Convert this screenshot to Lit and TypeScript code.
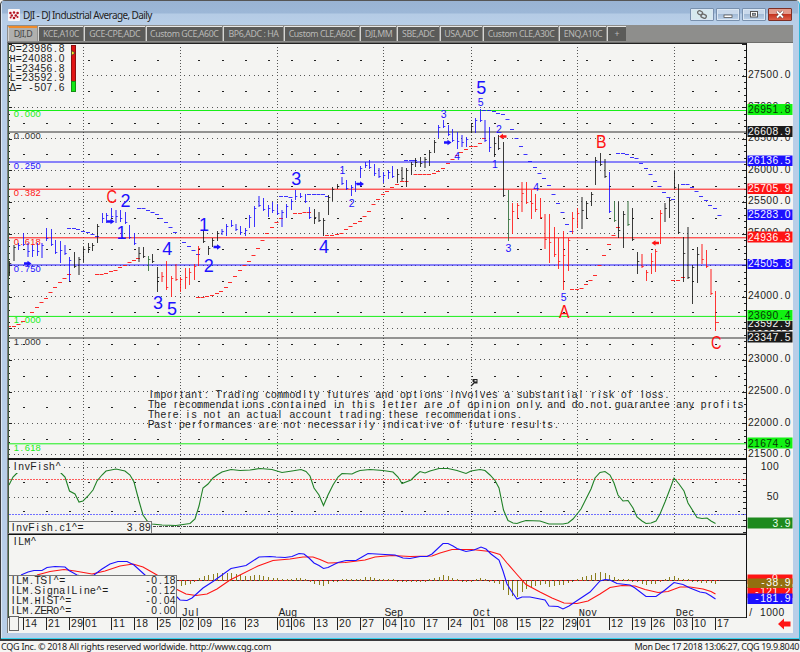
import { LitElement, html, svg, css } from "lit";
import { customElement, property } from "lit/decorators.js";

type P = [number, number];

const BLUE = "#1c10ff";
const RED = "#ff1414";
const LIME = "#18ee18";
const INK = "#1a1a1a";
const GREEN = "#2c6a35";

const pairs = (s: string): P[] =>
  s.trim().split(/\s+/).map((p) => p.split(",").map(Number) as P);

// x, high, low and colour key of every daily bar
const BARS = `9.5,261,276,k 14,245,261,k 18.5,243,250,b 23.5,233,246,b 28,243,257,b 32.5,245,257,b 37.5,243,256,b 42,243,258,b
46.5,228,241,b 51.5,229,246,b 55.5,240,254,b 60.5,241,263,b 65,245,255,b 69.5,257,281,b 74.5,252,268,k 79,257,275,k 83.5,247,262,k
88.5,243,253,k 92.5,243,251,k 97.5,224,243,k 102.5,213,223,b 106.5,213,223,b 111.5,208,218,b 116,210,223,b 120.5,210,222,b
125.5,212,224,b 129.5,225,239,b 134.5,233,245,b 139,247,262,k 143.5,247,258,k 148.5,256,271,g 152.5,254,263,k 157.5,267,292,k
162,272,282,r 166.5,261,290,r 171.5,276,297,r 176,264,281,r 180.5,277,292,r 185.5,268,289,r 189.5,268,285,r 194.5,264,280,r
198.5,246,266,r 203.5,230,243,k 208.5,246,255,k 212.5,238,247,k 217.5,231,241,k 222,229,235,b 226.5,224,236,b 231.5,220,227,b
236,224,231,b 240.5,226,235,b 245.5,228,236,b 249.5,215,228,b 254.5,206,227,b 259,196,207,b 263.5,198,211,b 268.5,205,217,b
272.5,202,213,b 277.5,204,215,b 282,210,227,b 286.5,204,218,b 291.5,199,210,b 295.5,190,200,b 300.5,193,198,b 305.5,194,203,b
309.5,207,219,b 314.5,209,224,k 319,212,222,k 323.5,218,236,k 328.5,195,215,k 332.5,187,201,k 337.5,184,189,k 342,177,185,b
346.5,180,190,b 351.5,185,196,b 355.5,181,192,b 360.5,166,178,b 365.5,162,168,b 369.5,160,169,b 374.5,164,176,b 379,168,178,b
383.5,172,183,b 388.5,170,179,b 392.5,166,178,b 397.5,169,183,k 402,167,181,k 406.5,168,187,k 411.5,162,175,k 415.5,158,167,k
420.5,157,167,k 425,157,168,k 429.5,150,166,k 434.5,140,153,k 438.5,125,138,b 443.5,120,128,b 448.5,125,136,b 452.5,129,142,b
457.5,132,149,b 462,135,147,b 466.5,137,147,b 471.5,123,133,k 475.5,118,133,b 480.5,109,122,b 485,120,142,b 489.5,127,152,b
494.5,137,157,k 498.5,135,150,k 503.5,142,197,k 508.5,190,241,g 512.5,203,234,r 517.5,203,219,r 522,182,212,r 526.5,182,204,r
531.5,190,219,r 535.5,194,212,r 540.5,198,219,r 545,214,249,r 549.5,214,263,r 554.5,227,257,r 558.5,238,269,r 563.5,231,290,r
568.5,238,271,r 572.5,212,234,r 577.5,208,228,r 582,197,229,k 586.5,201,218,k 591.5,192,206,k 595.5,157,185,k 600.5,153,166,k
605,159,178,k 609.5,172,213,b 614.5,201,222,g 618.5,202,238,k 623.5,211,248,k 628,201,226,g 632.5,208,241,k 637.5,252,274,k
642,254,268,r 646.5,270,281,r 651.5,253,274,r 655.5,249,272,r 660.5,210,244,r 665,203,222,k 669.5,198,218,k 674.5,171,189,k
678.5,184,234,k 683.5,237,282,k 688,227,279,k 692.5,265,304,k 697.5,247,283,k 702,244,264,r 706.5,250,268,r 711,269,295,r 715.5,291,331,r`
  .split(/\s+/)
  .map((s) => {
    const [x, h, l, c] = s.split(",");
    return { x: +x, h: +h, l: +l, c };
  });

const STOPS_BLUE = pairs(`69,228.5 74,228.5 78,229.5 83,231.5 88,232.5 92.5,234.5 97,236.5 139,208.5 143.5,208.5 148,210.5 152.5,212.5
157,214.5 161,218.5 166,222.5 170.5,227.5 175,232.5 184,242.5 189,246.5 193.5,250.5 198,254.5 281,196.5 286,196.5 290.5,197.5
309,194.5 314,194.5 318.5,194.5 323,194.5 327,196.5 406,160.5 411,160.5 415,160.5 484,110.5 489,110.5 494,111.5 498,113.5
503,114.5 507.5,119.5 512,129.5 516.5,138.5 521,146.5 525.5,154.5 530,161.5 535,167.5 539.5,173.5 544,178.5 549,185.5
553.5,194.5 558,203.5 562.5,212.5 567,224.5 571.5,231.5 618,153.5 623,153.5 627,154.5 632,157.5 636.5,158.5 641,163.5 646,168.5
650.5,174.5 655,181.5 659.5,186.5 664,192.5 668.5,197.5 673,199.5 683,184.5 687.5,184.5 692,187.5 696.5,191.5 701,196.5
706,200.5 710,205.5 715,208.5 719.5,215.5`);
const STOPS_RED = pairs(`9,326.5 14,326.5 18.5,324.5 23,321.5 32,312.5 37,307.5 41.5,302.5 46,298.5 50.5,292.5 55,287.5 60,282.5
64.5,278.5 69,274.5 97,274.5 101.5,274.5 106,273.5 111,271.5 115.5,270.5 120,267.5 125,265.5 129.5,262.5 134,260.5 138,258.5
198,297.5 202.5,297.5 207,296.5 212,295.5 217,293.5 221,291.5 226,287.5 230,282.5 235,276.5 240,270.5 244.5,265.5 249,261.5
253.5,255.5 258,248.5 262.5,240.5 267,233.5 272,227.5 276.5,222.5 281,218.5 295,213.5 300,213.5 304.5,212.5 309,212.5
327,235.5 332,235.5 337,234.5 341.5,233.5 346,229.5 350.5,226.5 355,223.5 360,221.5 364.5,216.5 369,211.5 373.5,204.5
378,199.5 383,194.5 387,191.5 392,187.5 397,184.5 402,181.5 406.5,181.5 415.5,174.5 420,174.5 424.5,174.5 429,174.5 434,173.5
438,171.5 443,168.5 448,163.5 452.5,159.5 457,155.5 461,152.5 466,149.5 471,146.5 475.5,146.5 480,143.5 484,138.5 572,289.5
577,289.5 581.5,288.5 586,284.5 590.5,280.5 595,275.5 599.5,265.5 604,255.5 609,244.5 613.5,235.5 618,227.5 673,280.5
678,280.5 683,277.5`);

const FISH = pairs(`9,485 13,477 17,473 24,470 55,470 60,472 65,477 69.5,491 75,494 79,502 83,501 88,496 93,490 97,481 102,475
106,471 111,470 116,469 125,471 130,475 134,482 139,501 143,515 148,522 152,524 162,525 176,525.5 190,523.5 195,519 199,506
203,488 208,484 213,478 217,475 222,472 231,469.5 240,470.5 250,470 260,468.5 272,469.5 282,472.5 292,471 301,469.5 306,471.5
310,476 314,488 319,495 323.5,505.5 328,495 333,485 338,477 342,473.5 352,474 356,472 360,470.5 370,469.5 383,470.5 393,472
398,477 402,483.5 411,480 416,475 420,471.5 425,473 430,471 439,468.5 448,468.5 457,470.5 466,473.5 471,471 480,469.5
485,470.5 490,475 495,480.5 499,488 503.5,510 508,520.5 513,523 517,523.5 521,522 526,520.5 540,521 549,524 563,524 568,523
573,519 577,514 581,509 586,499 591,489 595,478 600,472.5 605,471.5 610,475 614,483 618,495 623,501 628,500.5 633,508 637,517
642,521 646,523.5 651,523 656,521 660,514 665,502 670,489 674,478 679,484 684,491 688,503 693,511 697,517.5 702,518.5 707,518
711,521 715.5,523.5`);
const TSI = pairs(`21,575 28,572 34,570.5 42,570.5 47,567.5 55,566.5 65,567 69,570.5 77,575 86,577 94,575 102,569 110,564
118,561.5 127,561.5 134,565 145,575 176,596 180,600 187,600.5 192,598 203,588 213,581.5 231,568.5 246,565.5 259,557 270,556.5
276,557 285,557.5 292,556.5 299,553.5 304,554 309,558 314,563 319,565.5 323.5,568.5 328,567.5 338,562.5 346,560.5 356,560.5
362,557 368,553.5 385,554.5 395,555 403,558 410,558.5 420,556.5 427,556.5 432,554 443,543.5 448,543.5 453,546 457,548.5
466,551.5 474,550 481,547 486,549 491,554 499,560 503,571 507,584 512,592 517,599 522,597 530,597 545,600 549,606 558,606.5
563,609 569,606 578,600 590,592 600,581 605,579.5 610,580 617,583.5 630,585 635,588 646,596.5 656,596.5 665,590 674,582.5
683,584.5 690,588 700,592 706,593 711,596 715.5,599`);
const SIGNAL = pairs(`37,575 50,571.5 64,569.5 75,571 92,574 105,571 120,566 133,564 143,567 157,575 176,589 186,594 196,595.5
207,594 217,589 230,580 240,575 258,566 273,560.5 290,559 303,557 313,557 320,559.5 328,563 345,562.5 365,560 375,557
392,555.5 410,556.5 432,556 440,553 452,549.5 472,549.5 490,551.5 500,554.5 507,563 517,574.5 526,584.5 540,592 552,598
564,603 577,603.5 588,601 600,594 610,587.5 622,585.5 635,586 645,589.5 658,592.5 668,591.5 680,587 690,587 703,589
711,591.5 715.5,594`);

const MONTHS: [number, string][] = [[83.5, ""], [180.5, "Jul"], [277.5, "Aug"], [383.5, "Sep"], [471.5, "Oct"], [577.5, "Nov"], [674.5, "Dec"]];
const DAYS: [number, string][] = [
  [23.5, "14"], [46.5, "21"], [69.5, "29"], [83.5, "01"], [111.5, "11"], [134.5, "18"], [157.5, "25"], [180.5, "02"], [198.5, "09"],
  [222.5, "16"], [245.5, "23"], [277.5, "01"], [291.5, "06"], [314.5, "13"], [337.5, "20"], [360.5, "27"], [383.5, "04"],
  [401.5, "10"], [424.5, "17"], [448.5, "24"], [471.5, "01"], [494.5, "08"], [517.5, "15"], [540.5, "22"], [563.5, "29"],
  [577.5, "01"], [609.5, "12"], [632.5, "19"], [651.5, "26"], [674.5, "03"], [692.5, "10"], [715.5, "17"],
];
const WEEKS = [23, 46, 69, 88, 111, 134, 157, 198, 222, 245, 268, 291, 314, 337, 360, 383, 401, 424, 447, 471, 494, 517, 540, 563, 586, 609, 632, 651, 692, 715, 738];

// y, line colour, level name, label baseline, thickness
const LEVELS: [number, string, string, number, number][] = [
  [110.5, LIME, "0.000", 116.5, 1], [132, "#333", "0.000", 139, 1], [162, BLUE, "0.250", 168.5, 1], [189.2, RED, "0.382", 195.7, 1],
  [237.8, RED, "0.618", 245, 1], [265, BLUE, "0.750", 271.5, 1], [316.4, LIME, "1.000", 322.7, 1], [338, "#333", "1.000", 344.7, 1],
  [443.8, LIME, "1.618", 450.5, 1],
];

// text, left, baseline, size, colour
const WAVES: [string, number, number, number, string][] = [
  ["C", 106.5, 203, 18, RED], ["2", 120.5, 207, 18, BLUE], ["1", 116.5, 239, 18, BLUE], ["1", 199, 231, 18, BLUE], ["2", 203.8, 272, 18, BLUE],
  ["3", 291.3, 184.5, 18, BLUE], ["4", 319, 253, 18, BLUE], ["4", 162.3, 255, 18, BLUE], ["3", 153, 309, 18, BLUE], ["5", 167, 314.5, 18, BLUE],
  ["5", 476.3, 94, 18, BLUE], ["A", 559, 317.5, 18, RED], ["B", 596, 147.7, 18, RED], ["C", 711, 348.7, 18, RED],
  ["5", 477.7, 106, 10.5, BLUE], ["3", 440.7, 118, 10.5, BLUE], ["4", 454.3, 159.5, 10.5, BLUE], ["2", 496, 132.5, 10.5, BLUE],
  ["1", 492, 167.5, 10.5, BLUE], ["4", 533.3, 191, 10.5, BLUE], ["3", 505.5, 251.5, 10.5, BLUE], ["5", 560.8, 300.5, 10.5, BLUE],
  ["1", 339.5, 173.5, 10.5, BLUE], ["2", 348.7, 207, 10.5, BLUE],
];

const TAGS: [string, number, number, string, string][] = [
  ["23592.9", 321, 330, "#1a1a1a", "#f4f4f2"], ["26951.8", 104, 115, "#12f212", "#063806"], ["26608.9", 126, 137, "#1a1a1a", "#f4f4f2"],
  ["26136.5", 155.5, 166, BLUE, "#f4f4ff"], ["25705.9", 183.5, 194, RED, "#fff4f4"], ["25283.0", 209.5, 220, BLUE, "#f4f4ff"],
  ["24936.3", 231.5, 242.5, RED, "#fff4f4"], ["24505.8", 259, 269, BLUE, "#f4f4ff"], ["23690.4", 310, 320.5, "#12f212", "#063806"],
  ["23347.5", 331.5, 342.5, "#1a1a1a", "#f4f4f2"], ["21674.9", 437.5, 448.5, "#12f212", "#063806"], ["3.9", 517.5, 528.5, "#1e8a1e", "#e8ffe8"],
  ["0", 574.5, 584, RED, "#fff4f4"], ["-121.2", 587, 598, RED, "#fff4f4"], ["-38.9", 578.5, 588, "#93700f", "#fff"], ["-181.9", 593.5, 604, BLUE, "#f4f4ff"],
];

const NOTE = [
  "Important: Trading commodity futures and options involves a substantial risk of loss.",
  "The recommendations contained in this letter are of opinion only and do not guarantee any profits",
  "There is not an actual account trading these recommendations.",
  "Past performances are not necessarily indicative of future results.",
];

const priceY = (p: number) => 75.5 + (27500 - p) * 0.06322;
const line = (pts: P[]) => pts.map((p) => p.join(",")).join(" ");
const at = (pts: P[], x: number) => {
  const i = Math.max(1, pts.findIndex((p) => p[0] >= x));
  const [a, b] = [pts[i - 1], pts[i]];
  return a[1] + ((b[1] - a[1]) * (x - a[0])) / (b[0] - a[0]);
};

// Advance widths (em) of the sans face, grouped by glyph, used to centre each glyph in a fixed cell
const ADVANCE: [string, number][] = [
  ["ijl", 0.222], [" .,:/ftI", 0.278], ["-r", 0.333], ["^", 0.469], ["ckvsxyzJ", 0.5], ["L", 0.556], ["TFZ", 0.611], ["=", 0.584],
  ["APSEVΔ", 0.667], ["RC", 0.722], ["mMwWHOGDN", 0.6],
];
const advance = (ch: string) => ADVANCE.find(([set]) => set.includes(ch))?.[1] ?? 0.556;

// Fixed-pitch text: sans glyphs in equal cells, with the wide letters taken from the monospaced face
const cells = (t: string, x: number, y: number, fill = "#1c1c1c", pitch = 6.14, size = 10.3) => {
  const xs = [...t].map((ch, i) => (x + i * pitch + (pitch - advance(ch) * size) / 2).toFixed(2)).join(" ");
  const parts = t.split(/([mMwWHOGDN]+)/).filter(Boolean);
  return svg`<text class="cell" x=${xs} y=${y} font-size=${size} fill=${fill}>${parts.map((p) =>
    /[mMwWHOGDN]/.test(p) ? svg`<tspan class="wide">${p}</tspan>` : svg`<tspan>${p}</tspan>`)}</text>`;
};
const cellsEnd = (t: string, right: number, y: number, fill?: string) => cells(t, right - t.length * 6.14, y, fill);

@customElement("price-chart")
export class PriceChart extends LitElement {
  static styles = css`
    :host { display: block; flex: 1; min-height: 0; }
    svg { display: block; }
    text { white-space: pre; }
    .cell { font-family: "Liberation Sans", sans-serif; }
    .wide { font-family: "Liberation Mono", monospace; }
    .wave { font-family: "Liberation Sans", sans-serif; }
    .crisp { shape-rendering: crispEdges; }
    .dots { stroke: #555; stroke-width: 1; fill: none; }
    .line { fill: none; stroke-width: 1.1; }
    .bg { fill: #f4f4f2; }
    .box { fill: #f4f4f2; stroke: #777; }
  `;

  private grid() {
    const rows = Array.from({ length: 13 }, (_, i) => Math.round(75 + i * 31.6) + 0.5);
    const minor = Array.from({ length: 13 }, (_, i) => Math.round(60 + i * 31.6 - (i ? 0.5 : 0)));
    const xs = MONTHS.map((m) => m[0]);
    return svg`<g class="crisp">
      ${rows.map((y) => svg`<path class="dots" stroke-dasharray="1 3.615" d="M9 ${y}H746"/>`)}
      ${minor.map((y) => WEEKS.map((x) => svg`<rect x=${x - 0.5} y=${y} width="2" height="1" fill="#222"/>`))}
      ${xs.map((x) => svg`<path class="dots" stroke-dasharray="1 2.16" d="M${x} 47V457M${x} 462V533"/>`)}
      ${[467.5, 497.5].map((y) => svg`<path class="dots" stroke-dasharray="1 3.615" d="M9 ${y}H746"/>`)}
      ${[482, 511].map((y) => WEEKS.map((x) => svg`<rect x=${x - 0.5} y=${y} width="2" height="1" fill="#222"/>`))}
      ${Array.from({ length: 65 }, (_, i) => {
        const y = Math.round(44 + i * 6.322);
        const w = i % 5 === 0 ? 4 : 2;
        return svg`<rect x="9" y=${y} width=${w - 1} height="1" fill="#222"/><rect x=${746 - w} y=${y} width=${w} height="1" fill="#222"/>`;
      })}
      ${Array.from({ length: 12 }, (_, i) => svg`<rect x="743" y=${467 + Math.round(i * 5.9)} width="3" height="1" fill="#222"/>`)}
    </g>`;
  }

  private bars() {
    const tint: Record<string, string> = { k: INK, b: BLUE, r: RED, g: GREEN };
    return BARS.map((b, i) => {
      const last = i === BARS.length - 1;
      const n = BARS[i + 1] ?? { h: 312, l: 332 };
      const mid = (n.h + n.l) / 2;
      const close = last ? 322.5 : Math.round(Math.min(b.l - 2, Math.max(b.h + 2, mid))) + 0.5;
      const soft = b.x % 1 === 0;
      return svg`<path fill="none" stroke=${tint[b.c]} stroke-width=${soft ? 2 : 1} opacity=${soft ? 0.48 : 0.85} d="M${b.x} ${b.h}V${b.l}"/>
        <path fill="none" stroke=${tint[b.c]} opacity=".8" d="M${b.x} ${close}h${last ? 3.5 : 1.8}"/>`;
    });
  }

  private arrow(x: number, y: number, dir: number, c: string) {
    return svg`<path fill=${c} d="M${x - 3.5 * dir} ${y - 1.2}h${3.5 * dir}v-1.5l${4 * dir} 2.7l${-4 * dir} 2.7v-1.5h${-3.5 * dir}z"/>`;
  }

  render() {
    return html`<svg width="786" height="591" viewBox="7 42 786 591">
      <rect class="bg" x="7" y="42" width="786" height="591"/>
      ${this.grid()}
      ${LEVELS.map(([y, c, , , w]) => svg`<path d="M9 ${y}H746" stroke=${c} stroke-width=${w} fill="none"/>`)}
      ${LEVELS.map(([, c, t, b]) => cells(t, 13.7, b, c, 5.45, 9.4))}
      ${STOPS_BLUE.map(([x, y]) => svg`<path d="M${x - 2} ${y}h4" stroke=${BLUE} opacity=".85"/>`)}
      ${STOPS_RED.map(([x, y]) => svg`<path d="M${x - 2} ${y}h4" stroke=${RED} opacity=".9"/>`)}
      ${this.bars()}
      ${[[27.5, 263.5], [110.5, 221.5], [217, 247], [360, 184], [447.5, 142.5]].map(([x, y]) => this.arrow(x, y, 1, BLUE))}
      ${this.arrow(503, 136.5, -1, RED)}${this.arrow(655.5, 243, -1, RED)}
      ${WAVES.map(([t, x, b, s, c]) =>
        /[ABC]/.test(t)
          ? svg`<text class="wave" x=${x} y=${b} font-size=${s} fill=${c} textLength="10.5" lengthAdjust="spacingAndGlyphs">${t}</text>`
          : svg`<text class="wave" x=${x} y=${b} font-size=${s} fill=${c}>${t}</text>`)}

      <path d="M471 386l4-4" stroke="#222" stroke-width="1.3"/><path d="M472.5 379h5v4.5h-2.5l-2.5-2z" fill="#222"/><rect x="474.5" y="380" width="2" height="1.5" fill="#ddd"/>
      ${NOTE.map((t, i) => cells(t, 148, 398 + i * 10))}

      <rect class="bg" x="10" y="45" width="72" height="48"/>
      ${["O=23986.8", "H=24088.0", "L=23456.8", "L=23592.9", "Δ= -507.6"].map((t, i) => cells(t, 9.5, 51.6 + i * 9.95))}
      <rect x="71.5" y="45.5" width="4" height="36" fill="#e01414" stroke="#8a1010"/>
      <rect x="71.5" y="81.5" width="4" height="10" fill="#14e614" stroke="#129012"/>
      <path d="M71.5 50.5l3.500 2.500-3.500 2.500z" fill="#f4f02a" stroke="#333" stroke-width=".7"/>

      <path class="crisp" d="M9 479.5H746" stroke="#ff5a5a" stroke-dasharray="2 1"/>
      <path class="crisp" d="M9 514.5H746" stroke="#7070ff" stroke-dasharray="2 1"/>
      <path class="crisp" d="M9 526.5H746" stroke="#444" stroke-dasharray="3 1 1 1"/>
      <polyline class="line" stroke="#1f8026" points=${line(FISH)}/>
      <rect class="bg" x="10" y="462" width="52" height="11"/>
      ${cells("InvFish^", 12, 470)}
      <rect class="box" x="8.5" y="521.5" width="143" height="12"/>
      ${cells("InvFish.c1^=", 10, 530.5)}${cellsEnd("3.89", 151, 530.5)}

      ${cells("ILM^", 12, 545)}
      <path class="crisp" d="M9 580.5H746" stroke="#333"/><path class="crisp" d="M9 580.5H720" stroke="#e02020" stroke-dasharray="3 2"/>
      ${Array.from({ length: 117 }, (_, i) => {
        const x = 180.5 + i * 4.61;
        if (x > 716) return "";
        const d = (at(TSI, Math.min(x, 715)) - at(SIGNAL, Math.min(x, 715))) * 0.68;
        return svg`<path class="crisp" d="M${Math.round(x) + 0.5} 580.5v${Math.abs(d) < 1.5 ? Math.sign(d) * 1.5 : d}" stroke="#8a7d1c"/>`;
      })}
      <polyline class="line" stroke=${RED} points=${line(SIGNAL)}/>
      <polyline class="line" stroke=${BLUE} points=${line(TSI)}/>
      <rect class="box" x="8.5" y="575.5" width="168" height="42"/>
      ${[["ILM.TSI^=", "-0.18"], ["ILM.SignalLine^=", "-0.12"], ["ILM.HIST^=", "-0.04"], ["ILM.ZERO^=", "0.00"]].map(
        ([a, b], i) => svg`${cells(a, 10, 584.3 + i * 10)}${cellsEnd(b, 175.7, 584.3 + i * 10)}`)}

      <g class="crisp">
        <rect x="7" y="42" width="786" height="1" fill="#6e6e6c"/>
        <rect x="8" y="43" width="739" height="1" fill="#222"/>
        <rect x="7" y="43" width="1" height="590" fill="#7d7d7b"/>
        <rect x="8" y="44" width="1" height="574" fill="#3f5a3f"/>
        <rect x="8" y="458" width="738" height="2" fill="#111"/>
        <rect x="8" y="533" width="738" height="1" fill="#777"/><rect x="8" y="534" width="738" height="1" fill="#111"/>
        <rect x="8" y="617" width="739" height="1" fill="#333"/>
        <rect x="746" y="43" width="1" height="575" fill="#111"/>
        ${DAYS.map(([x]) => svg`<rect x=${x - 0.5} y="618" width="1" height="12" fill="#222"/>`)}
        <rect x="9.5" y="616.5" width="9" height="14" fill="#f4f4f2" stroke="#666"/>
      </g>
      ${DAYS.map(([x, t]) => cells(t, x + 1.3, 627))}
      ${MONTHS.map(([x, t]) => (t ? cells(t, x + 1.3, 615.5) : ""))}

      ${[27500, 27000, 26500, 26000, 25500, 25000, 24000, 23500, 23000, 22500, 22000, 21500].map(
        (p) => cells(p.toFixed(1), 747.7, priceY(p) + 2.5))}
      ${TAGS.map(([t, a, b, bg, fg]) => svg`<rect x="747.5" y=${a} width="45" height=${b - a} fill=${bg}/>
        ${cellsEnd(t, t === "0" ? 778 : 790.7, t === "23592.9" ? 327 : t === "0" ? 582 : t === "-121.2" ? 595 : b - 2, fg)}`)}
      ${cells("100", 760.5, 470)}${cells("50", 766.5, 499.5)}
      ${cells("/ 1000", 747.5, 616)}
      <path d="M778 624l6-5.5v3h6.5v5h-6.5v3z" fill=${RED}/>
    </svg>`;
  }
}

@customElement("tab-strip")
export class TabStrip extends LitElement {
  @property({ attribute: false }) tabs: [string, number][] = [];
  static styles = css`
    :host { display: flex; align-items: flex-end; height: 17px; background: #8e8e8c; padding: 0 0 1px 1px; box-sizing: border-box; }
    .tab { box-sizing: border-box; height: 15px; background: #5b5b59; border-top: 1px solid #e8e8e6; border-left: 1px solid #d4d4d2;
      font: 8.8px/14px "Noto Sans", sans-serif; letter-spacing: -0.42px; color: #b9b9b7; text-align: center; white-space: nowrap; margin-right: 1px; }
    .on { background: #b0b0ae; border-top: 2px solid #f08a28; line-height: 13px; color: #444; }
  `;
  render() {
    return this.tabs.map(([t, w], i) => html`<div class="tab ${i ? "" : "on"}" style="width:${w}px">${t}</div>`);
  }
}

@customElement("app-root")
export class AppRoot extends LitElement {
  static styles = css`
    :host { display: flex; flex-direction: column; width: 800px; height: 652px; background: #f5f5f3; overflow: hidden; }
    .window { box-sizing: border-box; height: 641px; display: flex; flex-direction: column; background: #b8cee8;
      border: 1px solid #3b3b3d; border-top-color: #555; border-bottom-width: 2px; border-right-color: #2fb6d8; border-radius: 5px 5px 0 0; padding: 0 6px;
      box-shadow: inset 0 -1px #35d3ef, inset 1px 0 #dbe7f4; }
    .title { flex: none; height: 24px; margin: 0 -5px; padding: 0 6px 0 6px; display: flex; align-items: center;
      background: linear-gradient(#99b3d3 0, #9cb7d7 12px, #b4cbe5 13px, #b9cfe8 24px); }
    .name { flex: 1; font: 10px/20px "Noto Sans", sans-serif; letter-spacing: -0.6px; color: #222; margin: 4px 0 0 3px; }
    .logo { margin-top: 4px; }
    .buttons { display: flex; gap: 2px; margin-top: 3px; }
    .btn { width: 24px; height: 13px; box-sizing: border-box; border: 1px solid #7890ad; border-radius: 1px; background: linear-gradient(#c9d9eb 50%, #a3bbd6 50%, #bed3ea);
      box-shadow: inset 0 0 0 1px #dbe7f3; display: flex; align-items: center; justify-content: center; }
    .pin { background: #d7e9ee; }
    .close { background: linear-gradient(#e39a8b 45%, #c43420 50%, #dd6049); border-color: #7d2f25; box-shadow: none; }
    .status { flex: 1; display: flex; justify-content: space-between; font: 9px/11px "Noto Sans", sans-serif; color: #1b1b1b; padding: 0 1px; white-space: nowrap; }
    .legal { letter-spacing: -0.24px; }
    .clock { letter-spacing: -0.35px; }
  `;

  private tabs: [string, number][] = [
    ["DJI,D", 29], ["KCE,A10C", 45], ["GCE-CPE,ADC", 60.5], ["Custom GCE,A60C", 76.5], ["BP6,ADC : HA", 60], ["Custom CLE,A60C", 75],
    ["DJI,MM", 36], ["SBE,ADC", 41.5], ["USA,ADC", 42.5], ["Custom CLE,A30C", 75], ["ENQ,A10C", 47], ["+", 18.5],
  ];

  render() {
    return html`
      <div class="window">
        <div class="title">
          <svg class="logo" width="12" height="12" viewBox="0 0 12 12"><rect width="12" height="12" rx="1" fill="#fbf6f6"/>
            <g fill="#b51622"><circle cx="2.4" cy="4" r="1.3"/><circle cx="6" cy="3.5" r="1.2"/><circle cx="9.6" cy="4" r="1.3"/>
            <circle cx="3.8" cy="6.5" r="1.2"/><circle cx="7.8" cy="6.5" r="1.3"/><circle cx="6" cy="9" r="1.3"/><circle cx="9.5" cy="8" r="1"/><circle cx="2.6" cy="8.5" r="1"/></g></svg>
          <div class="name">DJI - DJ Industrial Average, Daily</div>
          <div class="buttons">
            <div class="btn pin"><svg width="12" height="10" viewBox="0 0 12 10" fill="none" stroke="#6b6b69" stroke-width="1.3"><rect x="1.5" y="1" width="5" height="3.6" rx="1.8" transform="rotate(25 4 3)"/><rect x="5" y="4.5" width="5.5" height="3.6" rx="1.8" transform="rotate(25 8 6)"/></svg></div>
            <div class="btn"><svg width="10" height="9"><rect x="1" y="5" width="8" height="2.5" fill="#fff" stroke="#555" stroke-width=".8"/></svg></div>
            <div class="btn"><svg width="10" height="9"><rect x="1.5" y="1.5" width="7" height="5.5" fill="#fff" stroke="#555"/><rect x="3.5" y="3.3" width="3" height="2" fill="#9ab" stroke="#555" stroke-width=".8"/></svg></div>
            <div class="btn close"><svg width="10" height="9"><path d="M2 1.5l6 6M8 1.5l-6 6" stroke="#5a3a38" stroke-width="3"/><path d="M2 1.5l6 6M8 1.5l-6 6" stroke="#fff" stroke-width="1.8"/></svg></div>
          </div>
        </div>
        <tab-strip .tabs=${this.tabs}></tab-strip>
        <price-chart></price-chart>
      </div>
      <div class="status"><span class="legal">CQG Inc. © 2018 All rights reserved worldwide. http://www.cqg.com</span><span class="clock">Mon Dec 17 2018 13:06:27, CQG 19.9.8040</span></div>
    `;
  }
}
